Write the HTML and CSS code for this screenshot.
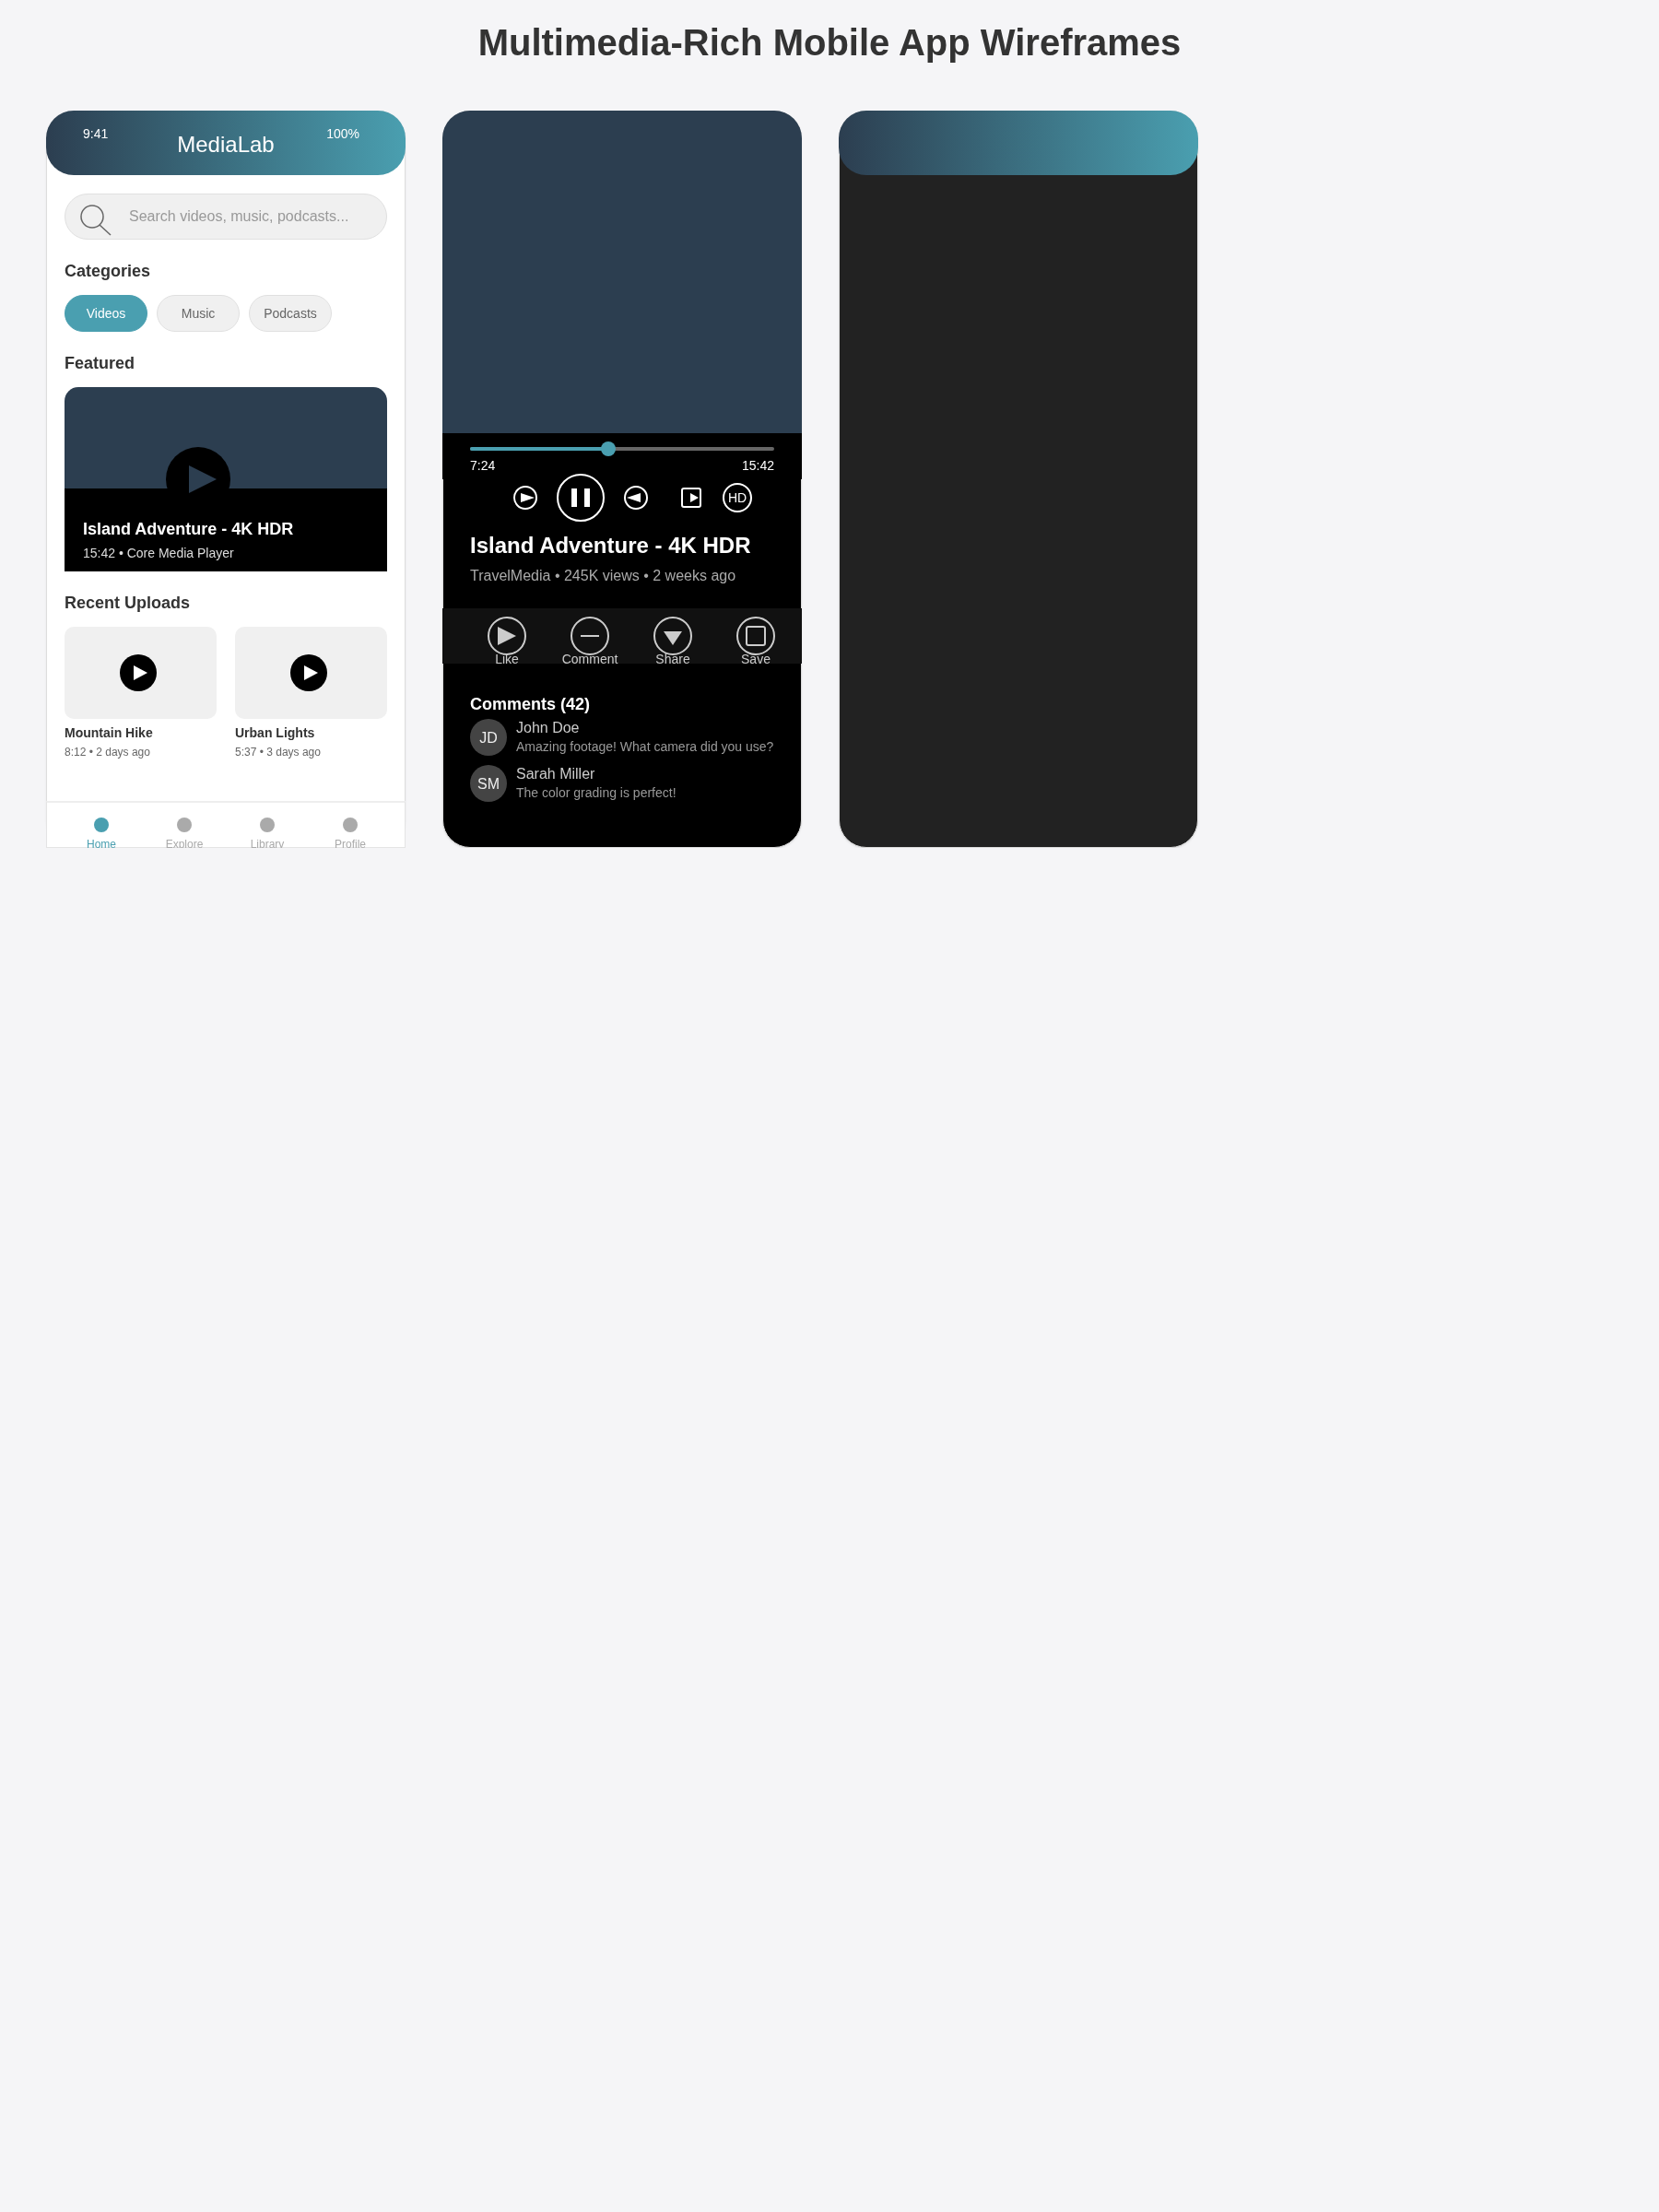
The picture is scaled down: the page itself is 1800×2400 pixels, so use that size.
FILE: index.html
```html
<!DOCTYPE html>
<html lang="en">
<head>
  <meta charset="UTF-8" />
  <title>Multimedia-Rich Mobile App Wireframes</title>
  <link rel="stylesheet" href="styles.css">
</head>
<body>
  <h1>Multimedia-Rich Mobile App Wireframes</h1>

  <div class="frames">
    <!-- home screen -->
    <div class="phone phone-home">
      <div class="app-header">
        <span class="status-time">9:41</span>
        <span class="app-title">MediaLab</span>
        <span class="status-battery">100%</span>
      </div>

      <div class="home-body">
        <div class="search">
          <svg class="search-icon" width="36" height="44" viewBox="0 0 36 44">
            <circle cx="14" cy="22" r="12" fill="none" stroke="#666" stroke-width="1.5"/>
            <line x1="22" y1="31" x2="34" y2="42" stroke="#666" stroke-width="1.5"/>
          </svg>
          <span>Search videos, music, podcasts...</span>
        </div>

        <h2 class="section-title">Categories</h2>
        <div class="chips">
          <span class="chip chip-active">Videos</span>
          <span class="chip">Music</span>
          <span class="chip">Podcasts</span>
        </div>

        <h2 class="section-title">Featured</h2>
        <div class="featured">
          <div class="featured-info">
            <div class="featured-title">Island Adventure - 4K HDR</div>
            <div class="featured-meta">15:42 • Core Media Player</div>
          </div>
          <svg class="featured-play" width="70" height="70" viewBox="0 0 70 70">
            <circle cx="35" cy="35" r="35" fill="#000"/>
            <polygon points="25,20 55,35 25,50" fill="#2c3e50"/>
          </svg>
        </div>

        <h2 class="section-title">Recent Uploads</h2>
        <div class="uploads">
          <div class="upload">
            <div class="thumb">
              <svg width="40" height="40" viewBox="0 0 40 40">
                <circle cx="20" cy="20" r="20" fill="#000"/>
                <polygon points="15,12 30,20 15,28" fill="#fff"/>
              </svg>
            </div>
            <div class="upload-title">Mountain Hike</div>
            <div class="upload-meta">8:12 • 2 days ago</div>
          </div>
          <div class="upload">
            <div class="thumb">
              <svg width="40" height="40" viewBox="0 0 40 40">
                <circle cx="20" cy="20" r="20" fill="#000"/>
                <polygon points="15,12 30,20 15,28" fill="#fff"/>
              </svg>
            </div>
            <div class="upload-title">Urban Lights</div>
            <div class="upload-meta">5:37 • 3 days ago</div>
          </div>
        </div>
      </div>

      <div class="bottom-nav">
        <div class="nav-item nav-active"><span class="nav-dot"></span><span class="nav-label">Home</span></div>
        <div class="nav-item"><span class="nav-dot"></span><span class="nav-label">Explore</span></div>
        <div class="nav-item"><span class="nav-dot"></span><span class="nav-label">Library</span></div>
        <div class="nav-item"><span class="nav-dot"></span><span class="nav-label">Profile</span></div>
      </div>
    </div>

    <!-- player screen -->
    <div class="phone phone-player">
      <div class="video"></div>
      <div class="player-panel">
        <div class="progress">
          <div class="progress-fill" style="width: 150px"></div>
          <div class="progress-knob"></div>
        </div>
        <div class="times"><span>7:24</span><span>15:42</span></div>
      </div>

      <div class="controls">
        <div class="ctrl">
          <svg width="26" height="26" viewBox="0 0 26 26">
            <circle cx="13" cy="13" r="12" fill="none" stroke="#fff" stroke-width="2"/>
            <polygon points="8,8 23,13 8,18" fill="#fff"/>
          </svg>
        </div>
        <div class="ctrl">
          <svg width="52" height="52" viewBox="0 0 52 52">
            <circle cx="26" cy="26" r="25" fill="none" stroke="#fff" stroke-width="2"/>
            <rect x="16" y="16" width="6" height="20" fill="#fff"/>
            <rect x="30" y="16" width="6" height="20" fill="#fff"/>
          </svg>
        </div>
        <div class="ctrl">
          <svg width="26" height="26" viewBox="0 0 26 26">
            <circle cx="13" cy="13" r="12" fill="none" stroke="#fff" stroke-width="2"/>
            <polygon points="18,8 3,13 18,18" fill="#fff"/>
          </svg>
        </div>
        <div class="ctrl">
          <svg width="22" height="22" viewBox="0 0 22 22">
            <rect x="1" y="1" width="20" height="20" rx="2" fill="none" stroke="#fff" stroke-width="2"/>
            <polygon points="10,6 19,11 10,16" fill="#fff"/>
          </svg>
        </div>
        <div class="ctrl ctrl-hd"><span class="hd">HD</span></div>
      </div>

      <h2 class="video-title">Island Adventure - 4K HDR</h2>
      <div class="video-meta">TravelMedia • 245K views • 2 weeks ago</div>

      <div class="actions">
        <div class="action">
          <svg width="44" height="44" viewBox="0 0 44 44">
            <circle cx="22" cy="22" r="20" fill="none" stroke="#ccc" stroke-width="2"/>
            <polygon points="12,12 32,22 12,32" fill="#ccc"/>
          </svg>
          <span>Like</span>
        </div>
        <div class="action">
          <svg width="44" height="44" viewBox="0 0 44 44">
            <circle cx="22" cy="22" r="20" fill="none" stroke="#ccc" stroke-width="2"/>
            <line x1="12" y1="22" x2="32" y2="22" stroke="#ccc" stroke-width="2"/>
          </svg>
          <span>Comment</span>
        </div>
        <div class="action">
          <svg width="44" height="44" viewBox="0 0 44 44">
            <circle cx="22" cy="22" r="20" fill="none" stroke="#ccc" stroke-width="2"/>
            <polygon points="12,17 32,17 22,32" fill="#ccc"/>
          </svg>
          <span>Share</span>
        </div>
        <div class="action">
          <svg width="44" height="44" viewBox="0 0 44 44">
            <circle cx="22" cy="22" r="20" fill="none" stroke="#ccc" stroke-width="2"/>
            <rect x="12" y="12" width="20" height="20" rx="2" fill="none" stroke="#ccc" stroke-width="2"/>
          </svg>
          <span>Save</span>
        </div>
      </div>

      <h3 class="comments-title">Comments (42)</h3>
      <div class="comments">
        <div class="comment">
          <div class="avatar">JD</div>
          <div>
            <div class="comment-name">John Doe</div>
            <div class="comment-text">Amazing footage! What camera did you use?</div>
          </div>
        </div>
        <div class="comment">
          <div class="avatar">SM</div>
          <div>
            <div class="comment-name">Sarah Miller</div>
            <div class="comment-text">The color grading is perfect!</div>
          </div>
        </div>
      </div>
    </div>

    <!-- empty dark screen -->
    <div class="phone phone-dark">
      <div class="app-header"></div>
    </div>
  </div>
</body>
</html>
```

FILE: styles.css
```css
* {
  box-sizing: border-box;
}
body {
  margin: 0;
  padding-top: 23px;
  background: #f5f5f7;
  font-family: "Liberation Sans", Arial, sans-serif;
}
h1 {
  margin: 0 0 51px;
  font-size: 40px;
  line-height: 46px;
  font-weight: bold;
  color: #333;
  text-align: center;
  will-change: transform;
}
h2, h3 {
  margin: 0;
}
svg {
  display: block;
}
.frames {
  display: flex;
  gap: 40px;
  padding-left: 50px;
  will-change: transform;
}
.phone {
  display: flex;
  flex-direction: column;
  width: 390px;
  height: 800px;
  border: 1px solid #ddd;
  border-radius: 30px;
  box-shadow: 0 1px 2px rgba(0,0,0,0.08);
}
.phone-home {
  background: #fff;
}
.phone-player {
  background: #000;
}
.phone-dark {
  background: #222;
}

/* header */
.app-header {
  display: grid;
  grid-template-columns: 1fr auto 1fr;
  flex: none;
  height: 70px;
  margin: -1px -1px 0;
  padding: 15px 40px 0;
  border-radius: 30px;
  background: linear-gradient(90deg, #2c3e50, #4a9fb0);
  color: #fff;
}
.status-time, .status-battery {
  font-size: 14px;
  line-height: 20px;
}
.status-battery {
  padding-right: 10px;
  text-align: right;
}
.app-title {
  margin-top: 8px;
  font-size: 24px;
  line-height: 28px;
}

/* home */
.home-body {
  padding: 20px 19px 0;
}
.search {
  display: flex;
  align-items: center;
  gap: 18px;
  height: 50px;
  padding-left: 15px;
  border: 1px solid #e0e0e0;
  border-radius: 25px;
  background: #f0f0f0;
  font-size: 16px;
  color: #999;
}
.search-icon {
  flex: none;
}
.section-title {
  margin: 24px 0 16px;
  font-size: 18px;
  line-height: 20px;
  font-weight: bold;
  color: #333;
}
.chips {
  display: flex;
  gap: 10px;
}
.chip {
  display: flex;
  align-items: center;
  justify-content: center;
  width: 90px;
  height: 40px;
  border: 1px solid #e0e0e0;
  border-radius: 20px;
  background: #f0f0f0;
  font-size: 14px;
  color: #666;
}
.chip-active {
  border-color: #4a9fb0;
  background: #4a9fb0;
  color: #fff;
}
.featured {
  position: relative;
  height: 200px;
  border-radius: 15px 15px 0 0;
  background: #2c3e50;
}
.featured-info {
  position: absolute;
  left: 0;
  right: 0;
  bottom: 0;
  height: 90px;
  padding: 34px 20px 0;
  background: #000;
}
.featured-title {
  font-size: 18px;
  line-height: 20px;
  font-weight: bold;
  color: #fff;
}
.featured-meta {
  margin-top: 6px;
  font-size: 14px;
  line-height: 20px;
  color: #ddd;
}
.featured-play {
  position: absolute;
  left: 110px;
  top: 65px;
}
.uploads {
  display: grid;
  grid-template-columns: 1fr 1fr;
  gap: 20px;
}
.thumb {
  display: flex;
  align-items: center;
  justify-content: center;
  height: 100px;
  padding-right: 5px;
  border-radius: 10px;
  background: #f0f0f0;
}
.upload-title {
  margin-top: 5px;
  font-size: 14px;
  line-height: 20px;
  font-weight: bold;
  color: #333;
}
.upload-meta {
  margin-top: 1px;
  font-size: 12px;
  line-height: 20px;
  color: #666;
}

/* bottom nav */
.bottom-nav {
  display: grid;
  grid-template-columns: repeat(4, 90px);
  flex: none;
  height: 51px;
  margin: auto -1px -1px;
  padding: 16px 14px 0;
  border: 1px solid #e4e4e4;
  border-top: 2px solid #eee;
  background: #fff;
}
.nav-item {
  display: flex;
  flex-direction: column;
  align-items: center;
  font-size: 12px;
  color: #aaa;
}
.nav-dot {
  flex: none;
  width: 16px;
  height: 16px;
  border-radius: 50%;
  background: #aaa;
}
.nav-label {
  margin-top: 6px;
  line-height: 14px;
}
.nav-active {
  color: #4a9fb0;
}
.nav-active .nav-dot {
  background: #4a9fb0;
}

/* player */
.video {
  flex: none;
  height: 350px;
  margin: -1px -1px 0;
  border-radius: 30px 30px 0 0;
  background: #2c3e50;
}
.player-panel {
  flex: none;
  height: 50px;
  margin: 0 -1px;
  padding: 15px 30px 0;
  background: #000;
}
.progress {
  position: relative;
  height: 4px;
  border-radius: 2px;
  background: #666;
}
.progress-fill {
  height: 4px;
  border-radius: 2px;
  background: #4a9fb0;
}
.progress-knob {
  position: absolute;
  left: 142px;
  top: -6px;
  width: 16px;
  height: 16px;
  border-radius: 50%;
  background: #4a9fb0;
}
.times {
  display: flex;
  justify-content: space-between;
  margin-top: 6px;
  font-size: 14px;
  line-height: 20px;
  color: #fff;
}
.controls {
  display: flex;
  flex: none;
  height: 50px;
  margin-top: -5px;
  padding-left: 59px;
}
.ctrl {
  display: flex;
  align-items: center;
  justify-content: center;
  width: 60px;
}
.ctrl-hd {
  width: 40px;
}
.hd {
  display: flex;
  flex: none;
  align-items: center;
  justify-content: center;
  width: 32px;
  height: 32px;
  border: 2px solid #fff;
  border-radius: 50%;
  font-size: 14px;
  color: #fff;
}
.video-title {
  margin: 12px 0 0 29px;
  font-size: 24px;
  line-height: 30px;
  font-weight: bold;
  color: #fff;
}
.video-meta {
  margin: 8px 0 0 29px;
  font-size: 16px;
  line-height: 20px;
  color: #aaa;
}
.actions {
  display: grid;
  grid-template-columns: repeat(4, 90px);
  flex: none;
  height: 60px;
  margin: 25px -1px 0;
  padding: 8px 25px 0;
  background: #111;
}
.action {
  display: flex;
  flex-direction: column;
  align-items: center;
  font-size: 14px;
  line-height: 16px;
  color: #ccc;
}
.action span {
  margin-top: -5px;
}
.comments-title {
  margin: 34px 0 0 29px;
  font-size: 18px;
  line-height: 20px;
  font-weight: bold;
  color: #fff;
}
.comments {
  display: flex;
  flex-direction: column;
  gap: 10px;
  margin: 6px 0 0 29px;
}
.comment {
  display: flex;
  gap: 10px;
}
.avatar {
  display: flex;
  flex: none;
  align-items: center;
  justify-content: center;
  width: 40px;
  height: 40px;
  padding-top: 1px;
  border-radius: 50%;
  background: #444;
  font-size: 16px;
  color: #eee;
}
.comment-name {
  font-size: 16px;
  line-height: 20px;
  color: #ccc;
}
.comment-text {
  font-size: 14px;
  line-height: 20px;
  color: #999;
}
```
